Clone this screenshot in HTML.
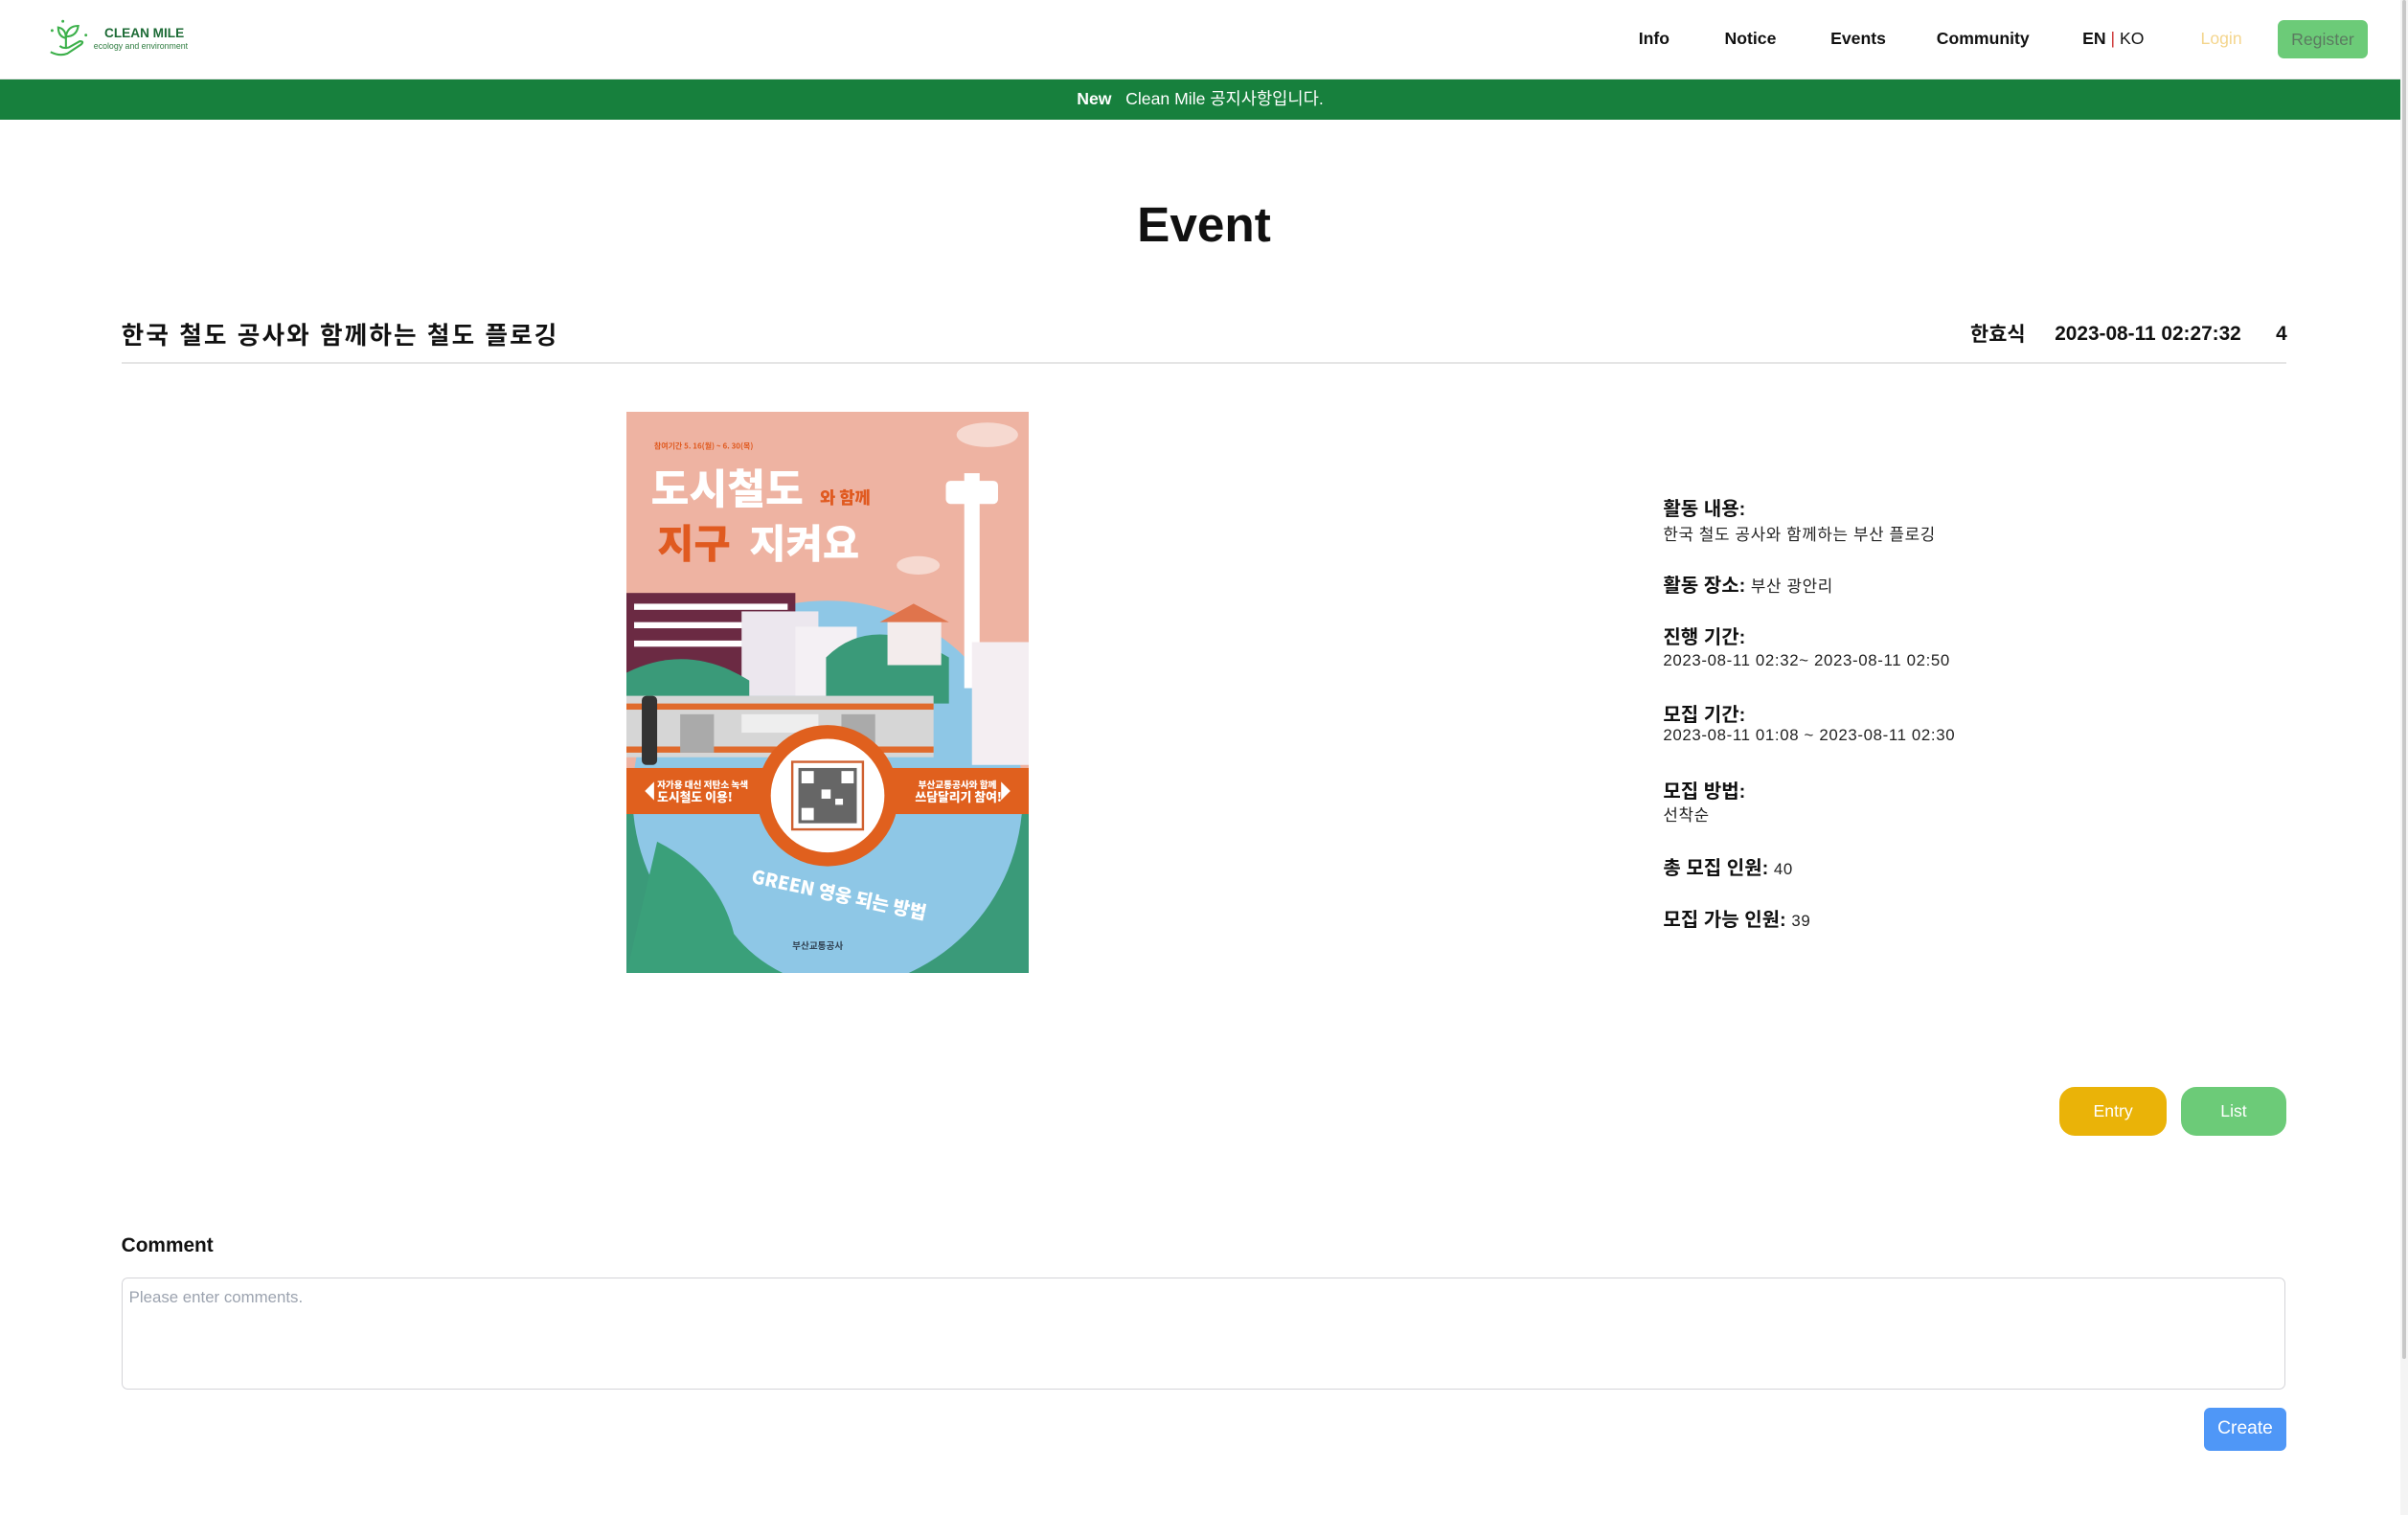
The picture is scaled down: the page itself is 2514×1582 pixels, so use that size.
<!DOCTYPE html>
<html><head><meta charset="utf-8">
<style>
html,body{margin:0;padding:0;background:#fff;overflow:hidden}
body{zoom:1.6033;width:1568px;height:987px;position:relative;font-family:"Liberation Sans","Noto Sans CJK KR",sans-serif;color:#111}
.a{position:absolute;white-space:nowrap}
.nav{font-size:11px;font-weight:bold;top:19px}
.lab{font-size:12.5px;font-weight:bold;left:1083px}
.val{font-size:10.5px;font-weight:normal;color:#222;letter-spacing:0.4px}
</style></head><body>
<div class="a" style="left:0;top:0;width:1563px;height:51px;border-bottom:1px solid #e5e5e5"></div>
<svg class="a" style="left:30px;top:12px" width="30" height="28" viewBox="0 0 30 28">
<g fill="none" stroke="#3cb04a" stroke-width="1.3">
<path d="M3 22 Q9 25 14 23 L23 17 Q25 15 22 15 L15 19 Q11 20 9 18"/>
<path d="M13 20 L13 10"/><path d="M13 13 Q8 12 8 6 Q13 7 13 13"/><path d="M13 12 Q14 5 21 5 Q20 12 13 12"/>
</g><circle cx="4" cy="8" r="0.9" fill="#3cb04a"/><circle cx="11" cy="2" r="0.9" fill="#3cb04a"/><circle cx="26" cy="11" r="0.9" fill="#3cb04a"/></svg>
<div class="a" style="left:68px;top:17px;font-size:8.5px;font-weight:bold;color:#1d6b36">CLEAN MILE</div>
<div class="a" style="left:61px;top:27px;font-size:5.5px;color:#2f7d40">ecology and environment</div>
<div class="a nav" style="left:1067px">Info</div>
<div class="a nav" style="left:1123px">Notice</div>
<div class="a nav" style="left:1192px">Events</div>
<div class="a nav" style="left:1261px">Community</div>
<div class="a nav" style="left:1356px">EN <span style="font-weight:normal;color:#c33">|</span> <span style="font-weight:normal">KO</span></div>
<div class="a nav" style="left:1433px;font-weight:normal;color:#f4d58d">Login</div>
<div class="a" style="left:1483px;top:13px;width:59px;height:25px;background:#6ccb78;border-radius:4px;font-size:11px;color:#5b7a60;text-align:center;line-height:25px">Register</div>
<div class="a" style="left:0;top:52px;width:1563px;height:26px;background:#17803d;color:#fff;font-size:11px;text-align:center;line-height:26px"><b>New</b>&nbsp;&nbsp;&nbsp;Clean Mile 공지사항입니다.</div>
<div class="a" style="left:1563px;top:0;width:5px;height:987px;background:#f4f4f4"></div>
<div class="a" style="left:1564px;top:0;width:3px;height:885px;background:#c8c8c8;border-radius:2px"></div>
<div class="a" style="left:0;width:1568px;top:128px;text-align:center;font-size:32px;font-weight:bold">Event</div>
<div class="a" style="left:79px;top:206px;font-size:16px;font-weight:bold;letter-spacing:1.3px">한국 철도 공사와 함께하는 철도 플로깅</div>
<div class="a" style="left:1283px;top:208px;font-size:13px;font-weight:bold">한효식</div>
<div class="a" style="left:1338px;top:210px;font-size:13px;font-weight:bold">2023-08-11 02:27:32</div>
<div class="a" style="left:1482px;top:210px;font-size:13px;font-weight:bold">4</div>
<div class="a" style="left:79px;top:236px;width:1410px;height:1px;background:#e5e5e5"></div>
<svg class="a" style="left:408px;top:268px" width="262" height="366" viewBox="0 0 262 366">
<rect width="262" height="366" fill="#eeb3a2"/>
<rect y="250" width="262" height="116" fill="#3a9a79"/>
<circle cx="131" cy="250" r="127" fill="#8ec7e6"/>
<path d="M20 280 Q60 300 70 340 Q90 366 131 376 L0 366Z" fill="#3aa07a"/>
<ellipse cx="235" cy="15" rx="20" ry="8" fill="#f6d9d0"/>
<ellipse cx="190" cy="100" rx="14" ry="6" fill="#f6d9d0"/>
<rect x="0" y="118" width="110" height="65" fill="#6b2a43"/>
<rect x="5" y="125" width="100" height="4" fill="#fff"/><rect x="5" y="137" width="100" height="4" fill="#fff"/><rect x="5" y="149" width="100" height="4" fill="#fff"/>
<rect x="75" y="130" width="50" height="55" fill="#ece7ee"/>
<rect x="110" y="140" width="40" height="45" fill="#f4f0f4"/>
<path d="M0 170 Q40 150 80 175 L80 190 L0 190Z" fill="#3a9a79"/>
<path d="M130 160 Q160 130 210 160 L210 190 L130 190Z" fill="#3a9a79"/>
<rect x="170" y="135" width="35" height="30" fill="#f3ecec"/>
<path d="M165 137 L187 125 L210 137Z" fill="#e0744c"/>
<rect x="220" y="40" width="10" height="140" fill="#fff"/>
<rect x="208" y="45" width="34" height="15" rx="3" fill="#fff"/>
<rect x="225" y="150" width="37" height="80" fill="#f4eef2"/>
<rect x="0" y="185" width="200" height="40" fill="#d6d6d6"/>
<rect x="0" y="190" width="200" height="4" fill="#e06a2c"/>
<rect x="0" y="218" width="200" height="4" fill="#e06a2c"/>
<rect x="10" y="185" width="10" height="45" rx="3" fill="#333"/>
<rect x="35" y="197" width="22" height="25" fill="#aaa"/><rect x="75" y="197" width="50" height="12" fill="#eee"/><rect x="140" y="197" width="22" height="25" fill="#aaa"/>
<rect x="0" y="232" width="262" height="30" fill="#e0601e"/>
<path d="M12 247 L18 241 L18 253Z" fill="#fff"/><path d="M250 247 L244 241 L244 253Z" fill="#fff"/>
<circle cx="131" cy="250" r="46" fill="#e0601e"/>
<circle cx="131" cy="250" r="37" fill="#fff"/>
<rect x="108" y="228" width="46" height="44" fill="#fff" stroke="#d06030" stroke-width="1.5"/>
<rect x="112" y="232" width="38" height="36" fill="#333" opacity="0.75"/>
<g fill="#fff"><rect x="114" y="234" width="8" height="8"/><rect x="140" y="234" width="8" height="8"/><rect x="114" y="258" width="8" height="8"/><rect x="127" y="246" width="6" height="6"/><rect x="136" y="252" width="5" height="4"/></g>
<g fill="#fff" font-family="Noto Sans CJK KR,sans-serif" font-weight="900">
<text x="16" y="60" font-size="27">도시철도</text>
<text x="20" y="95" font-size="26" fill="#e05a20">지구</text><text x="80" y="95" font-size="26">지켜요</text>
<text x="20" y="245" font-size="6">자가용 대신 저탄소 녹색</text><text x="20" y="254" font-size="8">도시철도 이용!</text>
<text x="190" y="245" font-size="6">부산교통공사와 함께</text><text x="188" y="254" font-size="8">쓰담달리기 참여!</text>
<text x="80" y="315" font-size="12" transform="rotate(12 120 315)">GREEN 영웅 되는 방법</text>
</g>
<text x="18" y="24" font-size="5" fill="#e05a20" font-family="Noto Sans CJK KR,sans-serif" font-weight="bold">참여기간 5. 16(월) ~ 6. 30(목)</text>
<text x="126" y="60" font-size="11" fill="#e05a20" font-family="Noto Sans CJK KR,sans-serif" font-weight="900">와 함께</text>
<text x="108" y="350" font-size="6" fill="#345" font-family="Noto Sans CJK KR,sans-serif" font-weight="bold">부산교통공사</text>
</svg>
<div class="a lab" style="top:321px">활동 내용:</div>
<div class="a val" style="left:1083px;top:339px">한국 철도 공사와 함께하는 부산 플로깅</div>
<div class="a lab" style="top:371px">활동 장소: <span class="val">부산 광안리</span></div>
<div class="a lab" style="top:405px">진행 기간:</div>
<div class="a val" style="left:1083px;top:424px">2023-08-11 02:32~ 2023-08-11 02:50</div>
<div class="a lab" style="top:455px">모집 기간:</div>
<div class="a val" style="left:1083px;top:473px">2023-08-11 01:08 ~ 2023-08-11 02:30</div>
<div class="a lab" style="top:505px">모집 방법:</div>
<div class="a val" style="left:1083px;top:522px">선착순</div>
<div class="a lab" style="top:555px">총 모집 인원: <span class="val">40</span></div>
<div class="a lab" style="top:589px">모집 가능 인원: <span class="val">39</span></div>
<div class="a" style="left:1341px;top:708px;width:70px;height:32px;background:#eab308;border-radius:10px;color:#fff;font-size:11px;text-align:center;line-height:32px">Entry</div>
<div class="a" style="left:1420px;top:708px;width:69px;height:32px;background:#6ccb78;border-radius:10px;color:#fff;font-size:11px;text-align:center;line-height:32px">List</div>
<div class="a" style="left:79px;top:804px;font-size:13px;font-weight:bold">Comment</div>
<div class="a" style="left:79px;top:832px;width:1408px;height:72px;border:1px solid #d4d4d8;border-radius:4px"></div>
<div class="a" style="left:84px;top:839px;font-size:10.5px;color:#9ca3af">Please enter comments.</div>
<div class="a" style="left:1435px;top:917px;width:54px;height:28px;background:#4f97f7;border-radius:4px;color:#fff;font-size:12px;text-align:center;line-height:28px">Create</div>
</body></html>
